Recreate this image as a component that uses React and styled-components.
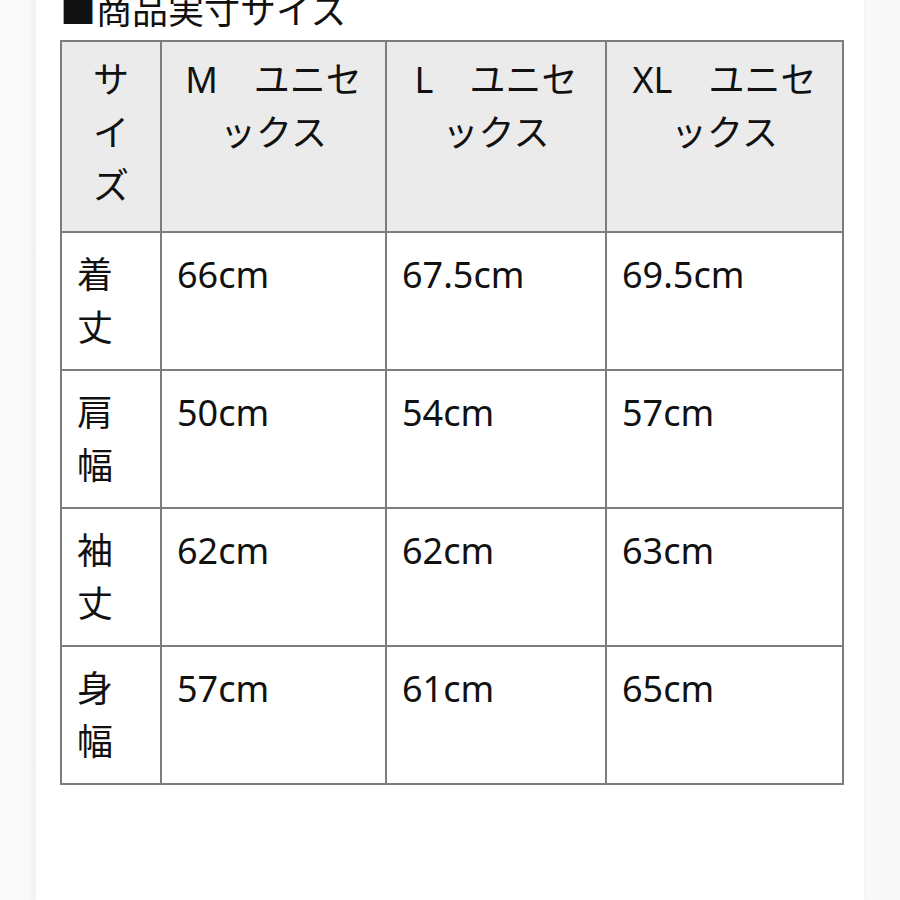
import React from 'react';
import styled, { createGlobalStyle } from 'styled-components';

const GlobalStyle = createGlobalStyle`
  html, body {
    margin: 0;
    padding: 0;
    background: #f8f8f8;
  }
  body {
    font-family: "Noto Sans", "Noto Sans CJK JP", sans-serif;
    color: #111;
  }
`;

const Page = styled.div`
  display: flex;
  height: 900px;
  overflow: hidden;
  padding: 0 38px 0 36px;
  background: linear-gradient(to right, #fafafa 0, #fafafa 28px, #f2f2f2 34px, #f8f8f8 36px);
`;

const Sheet = styled.div`
  flex: 1;
  background: #fff;
  padding: 0 20px 0 24px;
  box-shadow: 0 0 4px rgba(0, 0, 0, 0.04);
`;

const Title = styled.h2`
  margin: -16px 0 3px;
  font-size: 36px;
  font-weight: 400;
  line-height: 53px;
  white-space: nowrap;
`;

const Table = styled.table`
  width: 782px;
  table-layout: fixed;
  border-collapse: collapse;
  border: 2px solid #7d7d7d;
  font-size: 36px;
  line-height: 53px;
`;

const Col = styled.col`
  width: ${(p) => p.$w}px;
`;

const Cell = styled.td`
  border: 2px solid #7d7d7d;
  padding: ${(p) => (p.$head ? '11px 15px 19px' : '15px')};
  vertical-align: top;
  text-align: ${(p) => (p.$head ? 'center' : 'left')};
  background: ${(p) => (p.$head ? '#ebebeb' : '#fff')};
  font-weight: 400;
  word-break: break-all;
`;

const widths = [100, 225, 220, 237];

const headers = ['サイズ', 'M　ユニセックス', 'L　ユニセックス', 'XL　ユニセックス'];

const rows = [
  ['着丈', '66cm', '67.5cm', '69.5cm'],
  ['肩幅', '50cm', '54cm', '57cm'],
  ['袖丈', '62cm', '62cm', '63cm'],
  ['身幅', '57cm', '61cm', '65cm'],
];

export default function App() {
  return (
    <>
      <GlobalStyle />
      <Page>
        <Sheet>
          <Title>■商品実寸サイズ</Title>
          <Table>
            <colgroup>
              {widths.map((w, i) => (
                <Col key={i} $w={w} />
              ))}
            </colgroup>
            <thead>
              <tr>
                {headers.map((h) => (
                  <Cell as="th" key={h} $head>
                    {h}
                  </Cell>
                ))}
              </tr>
            </thead>
            <tbody>
              {rows.map((r) => (
                <tr key={r[0]}>
                  {r.map((v, i) => (
                    <Cell key={i}>{v}</Cell>
                  ))}
                </tr>
              ))}
            </tbody>
          </Table>
        </Sheet>
      </Page>
    </>
  );
}
